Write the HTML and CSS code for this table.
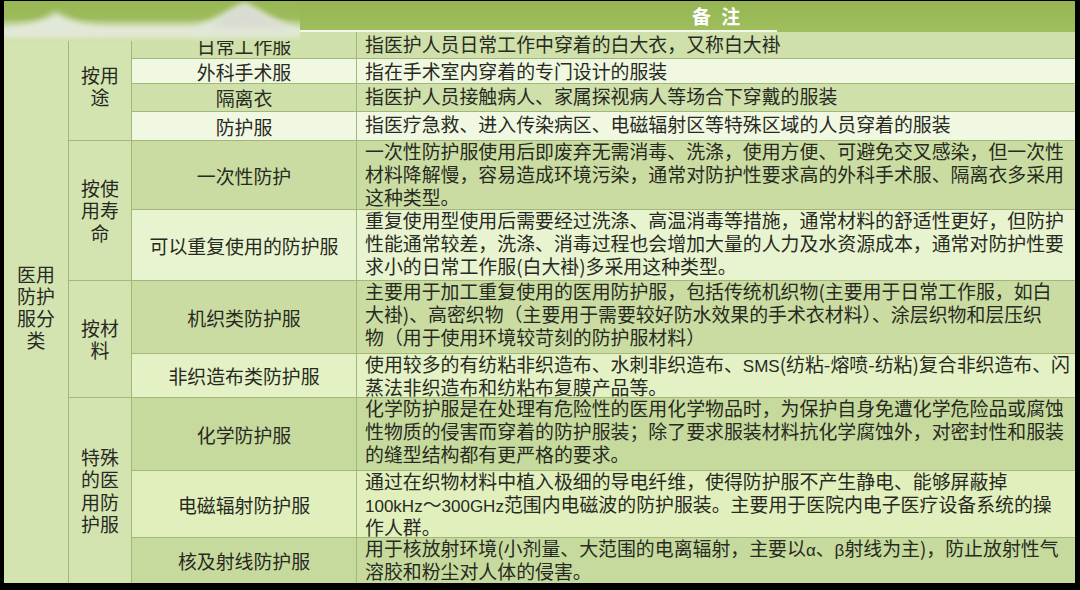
FILE: index.html
```html
<!DOCTYPE html>
<html lang="zh-CN">
<head>
<meta charset="utf-8">
<title>医用防护服分类</title>
<link rel="stylesheet" href="styles.css">
</head>
<body>
<div class="sheet">
  <div class="head">
    <div class="head-side"></div>
    <div class="head-title">备 注</div>
  </div>
  <div class="grid">
    <div class="c1">医用<br>防护<br>服分<br>类</div>
    <div class="c2 g1">按用<br>途</div>
    <div class="c2 g2">按使<br>用寿<br>命</div>
    <div class="c2 g3">按材<br>料</div>
    <div class="c2 g4">特殊<br>的医<br>用防<br>护服</div>

    <div class="name d1">日常工作服</div>
    <div class="desc d1">指医护人员日常工作中穿着的白大衣，又称白大褂</div>
    <div class="name l1">外科手术服</div>
    <div class="desc l1">指在手术室内穿着的专门设计的服装</div>
    <div class="name d1">隔离衣</div>
    <div class="desc d1">指医护人员接触病人、家属探视病人等场合下穿戴的服装</div>
    <div class="name l1">防护服</div>
    <div class="desc l1">指医疗急救、进入传染病区、电磁辐射区等特殊区域的人员穿着的服装</div>

    <div class="name d2">一次性防护</div>
    <div class="desc d2"><p class="txt">一次性防护服使用后即废弃无需消毒、洗涤，使用方便、可避免交叉感染，但一次性<br>材料降解慢，容易造成环境污染，通常对防护性要求高的外科手术服、隔离衣多采用<br>这种类型。</p></div>
    <div class="name l2">可以重复使用的防护服</div>
    <div class="desc l2"><p class="txt">重复使用型使用后需要经过洗涤、高温消毒等措施，通常材料的舒适性更好，但防护<br>性能通常较差，洗涤、消毒过程也会增加大量的人力及水资源成本，通常对防护性要<br>求小的日常工作服(白大褂)多采用这种类型。</p></div>

    <div class="name d2">机织类防护服</div>
    <div class="desc d2"><p class="txt">主要用于加工重复使用的医用防护服，包括传统机织物(主要用于日常工作服，如白<br>大褂)、高密织物（主要用于需要较好防水效果的手术衣材料）、涂层织物和层压织<br>物（用于使用环境较苛刻的防护服材料）</p></div>
    <div class="name l3">非织造布类防护服</div>
    <div class="desc l3"><p class="txt">使用较多的有纺粘非织造布、水刺非织造布、<span class="lat">SMS</span>(纺粘-熔喷-纺粘)复合非织造布、闪<br>蒸法非织造布和纺粘布复膜产品等。</p></div>

    <div class="name d3">化学防护服</div>
    <div class="desc d3"><p class="txt">化学防护服是在处理有危险性的医用化学物品时，为保护自身免遭化学危险品或腐蚀<br>性物质的侵害而穿着的防护服装；除了要求服装材料抗化学腐蚀外，对密封性和服装<br>的缝型结构都有更严格的要求。</p></div>
    <div class="name l4">电磁辐射防护服</div>
    <div class="desc l4"><p class="txt">通过在织物材料中植入极细的导电纤维，使得防护服不产生静电、能够屏蔽掉<br><span class="lat">100kHz</span>～<span class="lat">300GHz</span>范围内电磁波的防护服装。主要用于医院内电子医疗设备系统的操<br>作人群。</p></div>
    <div class="name d3">核及射线防护服</div>
    <div class="desc d3"><p class="txt">用于核放射环境(小剂量、大范围的电离辐射，主要以<span class="lat">α</span>、<span class="lat">β</span>射线为主)，防止放射性气<br>溶胶和粉尘对人体的侵害。</p></div>
  </div>

  <svg class="decor" viewBox="0 0 296 40" width="296" height="40" aria-hidden="true">
    <defs>
      <linearGradient id="band" x1="0" y1="0" x2="0" y2="1">
        <stop offset="0" stop-color="#97b654"/>
        <stop offset="0.42" stop-color="#9cbb5a"/>
        <stop offset="0.6" stop-color="#c6d7a4"/>
        <stop offset="0.72" stop-color="#e0e8d3"/>
        <stop offset="0.84" stop-color="#dee8cc"/>
        <stop offset="1" stop-color="#d0e1ab"/>
      </linearGradient>
      <filter id="soft" x="-20%" y="-60%" width="140%" height="220%">
        <feGaussianBlur stdDeviation="3"/>
      </filter>
    </defs>
    <rect width="296" height="40" fill="url(#band)"/>
    <path d="M0 28 C18 26 38 20 52 11 C64 18 80 25 100 27 L188 27 C208 20 226 8 241 2 C256 10 276 22 296 29 L296 33 L0 33 Z" fill="#e2e8d8" filter="url(#soft)"/>
    <path d="M206 26 C220 16 232 7 241 3 C252 10 268 20 290 28 Z" fill="#d9dbd0" filter="url(#soft)"/>
  </svg>
  <div class="rule"></div>
</div>
</body>
</html>
```

FILE: styles.css
```css
html, body {
  margin: 0;
  padding: 0;
  background: #000;
}

body {
  width: 1080px;
  height: 590px;
  overflow: hidden;
  font-family: "Noto Sans CJK SC", "Noto Sans", sans-serif;
  font-size: 18.9px;
  color: #272a22;
}

.sheet {
  position: relative;
  width: 1071px;
  margin: 1px 0 0 4px;
}

.head {
  height: 31px;
  display: flex;
  background: linear-gradient(#96b553, #9fbe5d);
}

.head-side {
  width: 353px;
}

.head-title {
  flex: 1;
  display: flex;
  align-items: center;
  justify-content: center;
  padding-bottom: 3px;
  color: #ffffff;
  font-weight: 700;
  word-spacing: 6px;
}

.grid {
  display: grid;
  grid-template-columns: 64px 62px 224px 718px;
  grid-template-rows: 26px 24px 27px 28px 68px 70px 72px 43px 72px 66px 45px;
  gap: 1px;
  background: #a2b878;
}

.c1,
.c2 {
  display: flex;
  align-items: center;
  justify-content: center;
  text-align: center;
  background: #d4e4b1;
}

.c1 {
  grid-column: 1;
  grid-row: 1 / span 11;
  line-height: 22px;
  padding-bottom: 2px;
}

.c2 {
  grid-column: 2;
  line-height: 22.5px;
}

.g1 { grid-row: 1 / span 4; }
.g2 { grid-row: 5 / span 2; }
.g3 { grid-row: 7 / span 2; }
.g4 { grid-row: 9 / span 3; }

.name {
  grid-column: 3;
  display: flex;
  align-items: center;
  justify-content: center;
  white-space: nowrap;
  line-height: 23px;
}

.desc {
  grid-column: 4;
  padding: 0 0 0 8px;
  line-height: 23px;
  white-space: nowrap;
}

.txt {
  margin: -2px 0 0;
}

.lat {
  font-family: "Liberation Sans", "Noto Sans", sans-serif;
  font-size: 17px;
  line-height: 1;
}

.d1 { background: #cfe0aa; }
.d2 { background: #cadca1; }
.d3 { background: #c7da9d; }
.l1 { background: #f1f8e1; }
.l2 { background: #e8f3cf; }
.l3 { background: #e4f1c5; }
.l4 { background: #e1efbc; }

.decor {
  position: absolute;
  left: 0;
  top: 0;
  display: block;
}

.rule {
  position: absolute;
  left: 296px;
  top: 29px;
  width: 477px;
  height: 2px;
  background: #f4f8ea;
}
```
